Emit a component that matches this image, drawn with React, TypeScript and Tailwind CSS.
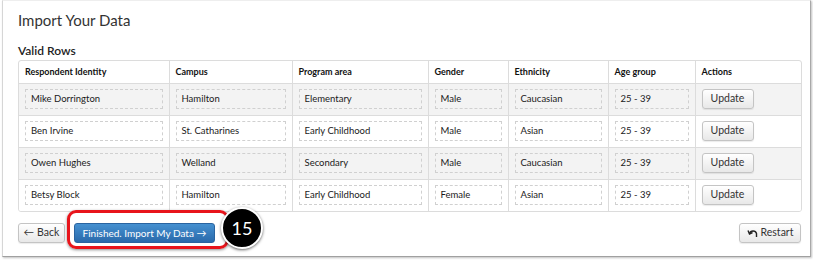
import React from "react";

interface RowData {
  name: string;
  campus: string;
  program: string;
  gender: string;
  ethnicity: string;
  age: string;
}

const rows: RowData[] = [
  { name: "Mike Dorrington", campus: "Hamilton", program: "Elementary", gender: "Male", ethnicity: "Caucasian", age: "25 - 39" },
  { name: "Ben Irvine", campus: "St. Catharines", program: "Early Childhood", gender: "Male", ethnicity: "Asian", age: "25 - 39" },
  { name: "Owen Hughes", campus: "Welland", program: "Secondary", gender: "Male", ethnicity: "Caucasian", age: "25 - 39" },
  { name: "Betsy Block", campus: "Hamilton", program: "Early Childhood", gender: "Female", ethnicity: "Asian", age: "25 - 39" },
];

const headers = [
  { label: "Respondent Identity", w: "w-[150px]" },
  { label: "Campus", w: "w-[123px]" },
  { label: "Program area", w: "w-[136px]" },
  { label: "Gender", w: "w-[80px]" },
  { label: "Ethnicity", w: "w-[100px]" },
  { label: "Age group", w: "w-[87px]" },
  { label: "Actions", w: "w-[106px]" },
];

const Field = ({ value }: { value: string }) => (
  <div className="h-[20px] border border-dashed border-[#d0d0d0] pl-[5px] flex items-center text-[9.5px] text-[#1a1a1a]">
    {value}
  </div>
);

const GreyButton: React.FC<{ className?: string; children: React.ReactNode }> = ({ className, children }) => (
  <button
    className={
      "h-[20px] rounded-[3px] border border-[#c4c4c4] bg-gradient-to-b from-white to-[#e8e8e8] text-[#333] shadow-[0_1px_1px_rgba(0,0,0,0.08)] flex items-center justify-center " +
      (className || "")
    }
  >
    {children}
  </button>
);

export default function App() {
  return (
    <div className="h-[261px] w-[813px] bg-white overflow-hidden" style={{ fontFamily: "Lato, 'Open Sans', sans-serif" }}>
      <div className="ml-[2px] w-[809px] h-[257px] border-l border-r border-b border-t border-t-[#eee] border-l-[#d6d6d6] border-r-[#a8a8a8] border-b-[#a0a0a0] shadow-[1px_1px_2px_rgba(0,0,0,0.25)] pl-[15px] pr-[9px]">
        <h1 className="pt-[9px] text-[15px] leading-[20px] text-[#333] font-normal">Import Your Data</h1>
        <h2 className="mt-[13px] text-[12px] leading-[16px] text-[#222] font-semibold">Valid Rows</h2>

        <div className="mt-[1px] w-[784px] border border-[#dcdcdc] rounded-[3px] overflow-hidden">
          <table className="w-full border-collapse table-fixed">
            <thead>
              <tr className="h-[22px]">
                {headers.map((h, i) => (
                  <th
                    key={h.label}
                    className={
                      h.w +
                      " text-left align-middle pl-[6px] text-[9px] font-bold text-[#111] border-b border-[#dcdcdc] " +
                      (i > 0 ? "border-l" : "")
                    }
                  >
                    {h.label}
                  </th>
                ))}
              </tr>
            </thead>
            <tbody>
              {rows.map((r, idx) => {
                const cells = [r.name, r.campus, r.program, r.gender, r.ethnicity, r.age];
                return (
                  <tr
                    key={r.name}
                    className={(idx % 2 === 0 ? "bg-[#f3f3f3] " : "bg-white ") + "h-[32px]"}
                  >
                    {cells.map((c, i) => (
                      <td
                        key={i}
                        className={
                          "px-[6px] align-middle border-[#dcdcdc] " +
                          (idx < rows.length - 1 ? "border-b " : "") +
                          (i > 0 ? "border-l" : "")
                        }
                      >
                        <Field value={c} />
                      </td>
                    ))}
                    <td
                      className={
                        "px-[6px] align-middle border-l border-[#dcdcdc] " + (idx < rows.length - 1 ? "border-b" : "")
                      }
                    >
                      <GreyButton className="w-[52px] text-[10.5px]">Update</GreyButton>
                    </td>
                  </tr>
                );
              })}
            </tbody>
          </table>
        </div>

        <div className="mt-[11px] w-[784px] flex items-center">
          <GreyButton className="w-[47px] text-[10.5px] gap-[3px]">
            <span>←</span>
            <span>Back</span>
          </GreyButton>
          <div className="relative ml-[9px]">
            <button className="h-[20px] w-[141px] rounded-[3px] border border-[#2a64a0] bg-gradient-to-b from-[#4590d0] to-[#2a6aab] text-white text-[10px] flex items-center justify-center">
              Finished. Import My Data →
            </button>
            <div className="absolute left-[-7px] top-[-13px] w-[162px] h-[39px] rounded-[9px] border-[3px] border-[#e8141b] shadow-[0_1px_3px_rgba(0,0,0,0.45)] pointer-events-none" />
            <div className="absolute left-[147px] top-[-16px] w-[42px] h-[42px] rounded-full bg-black border-2 border-white shadow-[0_1px_3px_rgba(0,0,0,0.6)] flex items-center justify-center text-white text-[18px] leading-none">
              15
            </div>
          </div>
          <GreyButton className="ml-auto mr-[1px] w-[62px] text-[10.5px] gap-[3px]">
            <svg width="11" height="9" viewBox="0 0 11 9" fill="none" stroke="#222" strokeWidth="1.4">
              <path d="M2.5 4.5 C3.5 1.5 8.5 1 9.5 4.5 L9.5 8" />
              <path d="M1 1.5 L2.5 5 L5.5 3.5" />
            </svg>
            <span>Restart</span>
          </GreyButton>
        </div>
      </div>
    </div>
  );
}
